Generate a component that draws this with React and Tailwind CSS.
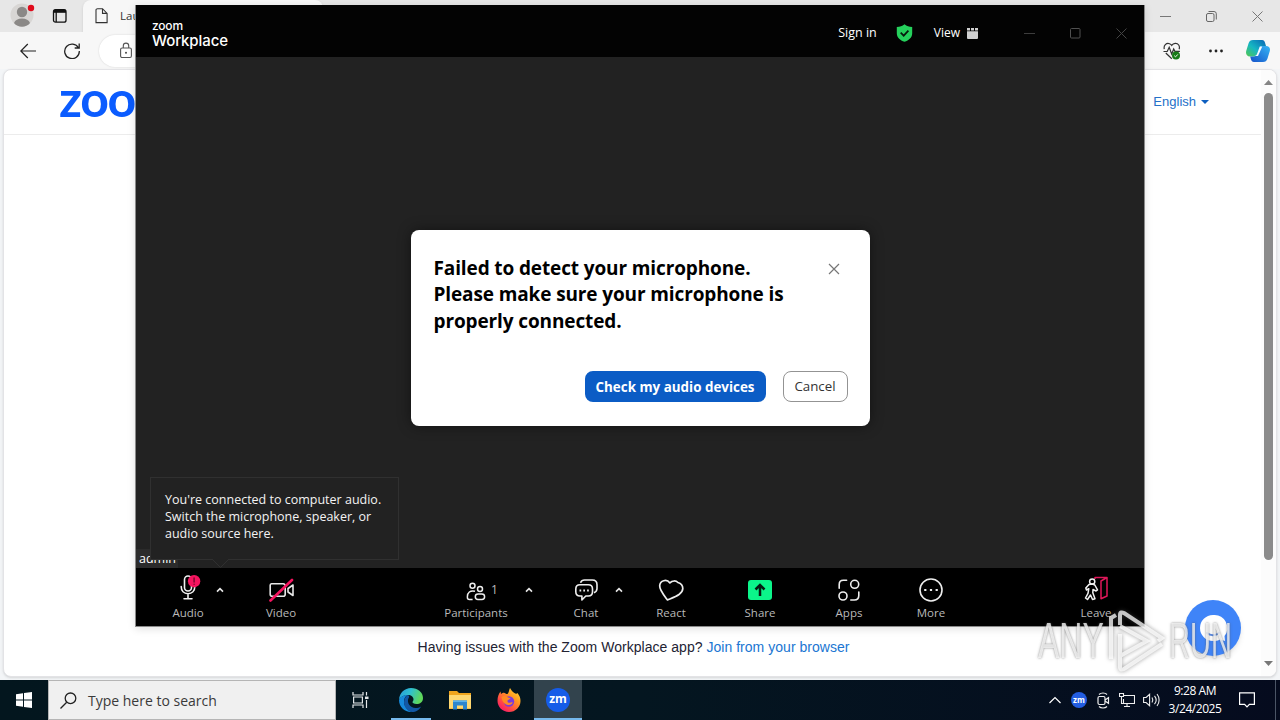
import React from "react";

const ui = "font-['Open_Sans','Noto_Sans',sans-serif]";

function CaretUp() {
  return (
    <svg className="mt-[19px] h-[6px] w-2 shrink-0" viewBox="0 0 8 6" fill="none" stroke="#e6e6e6" strokeWidth="1.6">
      <path d="M1 4.6 4 1.6l3 3" />
    </svg>
  );
}

function ToolItem({ label, className, children }) {
  return (
    <div className={`flex h-full shrink-0 flex-col items-center ${className}`}>
      <div className="flex h-[38px] items-end justify-center pb-1">{children}</div>
      <span className="text-[11.5px] leading-[14px] whitespace-nowrap text-[#b9b9b9]">{label}</span>
    </div>
  );
}

function MicIcon() {
  return (
    <svg className="h-7 w-7" viewBox="0 0 28 28" fill="none" stroke="#f0f0f0" strokeWidth="1.6" strokeLinecap="round">
      <rect x="10.5" y="2" width="7" height="15" rx="3.5" />
      <path d="M7.2 12.5c0 4.5 2.8 7.2 6.8 7.2s6.8-2.7 6.8-7.2M14 19.7v4.5M10 24.7h8" />
      <circle cx="20.1" cy="7.2" r="6.2" fill="#f5145f" stroke="none" />
      <path d="M20.1 4v4M20.1 10.2v.1" stroke="#7a0a30" strokeWidth="1.5" />
    </svg>
  );
}

function VideoIcon() {
  return (
    <svg className="h-6 w-[26px]" viewBox="0 0 26 24" fill="none" stroke="#e8e8e8" strokeWidth="1.6" strokeLinejoin="round">
      <path d="M3.500 5.800h11.700a2 2 0 0 1 2 2v8.400a2 2 0 0 1-2 2H4.200a2 2 0 0 1-2-2V7.300a1.500 1.500 0 0 1 1.300-1.500z" />
      <path d="m20 10.500 5-3.500v10.500l-5-3.500z" />
      <path d="M2.500 22.500 24 2" stroke="#f5145f" strokeWidth="2.600" strokeLinecap="round" />
    </svg>
  );
}

function ParticipantsIcon() {
  return (
    <svg className="h-5 w-5" viewBox="0 0 20 20" fill="none" stroke="#eee" strokeWidth="1.500">
      <circle cx="6.500" cy="3.700" r="2.500" />
      <circle cx="14" cy="7" r="2.500" />
      <path d="M9 9.200C4 8 1.400 10.700 1.400 14.500v1c0 1.300.800 2 2 2h3.200" />
      <rect x="9.300" y="12" width="9.300" height="5.500" rx="2.700" />
    </svg>
  );
}

function ChatIcon() {
  return (
    <svg className="h-6 w-6" viewBox="0 0 24 24" fill="none" stroke="#eee" strokeWidth="1.600" strokeLinejoin="round">
      <path d="M6.500 4.800C7.300 2.900 8.500 2 10.500 2h7.800c2.900 0 4.700 1.800 4.700 4.700v3.800c0 2-1 3.300-3 4.200" />
      <path d="M6 6.800h8.300c2.700 0 4.200 1.500 4.200 4.200v2.800c0 2.700-1.500 4.200-4.200 4.200h-2.500l-3.900 4v-4H6c-2.700 0-4.200-1.500-4.200-4.200V11c0-2.700 1.500-4.200 4.200-4.200z" />
      <path d="M5.500 12.500h1.700M9.300 12.500H11M13.100 12.500h1.700" strokeWidth="1.900" />
    </svg>
  );
}

function HeartIcon() {
  return (
    <svg className="h-6 w-[26px]" viewBox="0 0 26 24" fill="none" stroke="#eee" strokeWidth="1.700" strokeLinejoin="round">
      <path d="M9.500 22C4.800 15.800 1.500 12 1.700 7.800 2 2.500 8.700.600 11.900 4.900c2.400-2.600 6.200-2.400 8-.400 1 .300 4.900 1.900 4.900 6.100 0 5.400-7 7.800-15.300 11.400z" />
    </svg>
  );
}

function ShareIcon() {
  return (
    <svg className="h-6 w-6" viewBox="0 0 24 24">
      <rect y="2" width="24" height="20" rx="3" fill="#0bf58a" />
      <path d="M12 18V7M7.500 11.500 12 7l4.500 4.500" fill="none" stroke="#061c12" strokeWidth="2.500" />
    </svg>
  );
}

function AppsIcon() {
  return (
    <svg className="h-6 w-6" viewBox="0 0 24 24" fill="none" stroke="#eee" strokeWidth="1.600" strokeLinecap="round">
      <circle cx="17.700" cy="6.300" r="4" />
      <circle cx="6" cy="18" r="4" />
      <path d="M2.200 10.300V6.500c0-2.700 1.400-4.200 4.200-4.200h3.200M21.800 14v3.500c0 3-1.500 4.500-4.500 4.500h-3.500" />
    </svg>
  );
}

function MoreIcon() {
  return (
    <svg className="h-6 w-6" viewBox="0 0 24 24" fill="none" stroke="#eee" strokeWidth="1.600">
      <circle cx="12" cy="12" r="11" />
      <path d="M5.200 12h2.200M10.900 12h2.200M16.600 12h2.200" strokeWidth="2.200" />
    </svg>
  );
}

function LeaveIcon() {
  return (
    <svg className="h-[26px] w-6" viewBox="0 0 24 26" fill="none" stroke="#f2f2f2" strokeWidth="1.500" strokeLinejoin="round">
      <path d="M11 3V1.500h12V20l-6 2.800V5l6-3.500" stroke="#e0175a" />
      <circle cx="8.200" cy="5.500" r="2.600" />
      <path d="M5 8.500 1.800 12l.7 2 2.300-1.300-.8 4.600L1.500 22l2 1.500 3-4.500 2 4.500 2.500-.8-2.200-6 .2-3.200L12 15l1.500-1.200L10.800 9 8.500 8z" />
    </svg>
  );
}

function BrowserTabs() {
  return (
    <div className="flex h-8 bg-[#e7e7e7]">
      <div className="flex w-[83px] items-center pl-[10px]">
        <svg className="h-7 w-7" viewBox="0 0 28 28">
          <circle cx="12" cy="13" r="11.500" fill="#d8d6d4" />
          <circle cx="12" cy="10" r="5.200" fill="#8b8987" />
          <path d="M4 21c1-3 4-4.600 8-4.600s7 1.600 8 4.600c-2 2.500-5 3.700-8 3.700S6 23.500 4 21z" fill="#8b8987" />
          <circle cx="21" cy="6" r="3.200" fill="#e00b1c" />
        </svg>
        <svg className="ml-[14px] h-4 w-4" viewBox="0 0 16 16" fill="none" stroke="#111" strokeWidth="1.300">
          <rect x="1.500" y="1.700" width="12.500" height="12.500" rx="2" />
          <path d="M2 3.300h12" strokeWidth="3" />
          <path d="M4.200 4v10" />
        </svg>
      </div>
      <div className="flex w-[240px] items-center rounded-t-lg bg-[#f7f7f7] pl-[12px] shadow-sm">
        <svg className="h-4 w-[13px]" viewBox="0 0 13 16" fill="none" stroke="#333" strokeWidth="1.100">
          <path d="M2.500.700h5l4.600 4.700v9.200H1V2C1 1.200 1.600.700 2.500.700zM7.500.700v4.700h4.600" />
        </svg>
        <span className="ml-3 text-[11.500px] text-[#333]">Lau</span>
      </div>
      <div className="ml-auto flex items-center gap-[35px] pr-[17px]">
        <svg className="h-[11px] w-[11px]" viewBox="0 0 11 11" stroke="#777" strokeWidth="1">
          <path d="M0 5.500h11" />
        </svg>
        <svg className="h-[11px] w-[11px]" viewBox="0 0 11 11" fill="none" stroke="#666" strokeWidth="1">
          <rect x=".500" y="2.500" width="7.500" height="8" rx="1.500" />
          <path d="M2.500.500H8a2.300 2.300 0 0 1 2.300 2.300V8.500" />
        </svg>
        <svg className="h-[11px] w-[11px]" viewBox="0 0 11 11" stroke="#777" strokeWidth="1">
          <path d="m.500.500 10 10M10.500.500l-10 10" />
        </svg>
      </div>
    </div>
  );
}

function BrowserToolbar() {
  return (
    <div className="flex h-[37px] items-center bg-[#f7f7f7] pl-5">
      <svg className="h-4 w-4" viewBox="0 0 16 16" fill="none" stroke="#222" strokeWidth="1.200">
        <path d="M16 8H.800M7.800 1 .800 8l7 7" />
      </svg>
      <svg className="ml-7 h-4 w-4" viewBox="0 0 16 16" fill="none" stroke="#222" strokeWidth="1.300">
        <path d="M14.500 5A7.300 7.300 0 1 0 15.300 8M15.200.500V5h-4.500" />
      </svg>
      <div className="ml-[19px] flex h-8 w-[900px] items-center rounded-full bg-white pl-[21px] shadow-[0_0_2px_rgba(0,0,0,0.15)]">
        <svg className="h-[17px] w-3" viewBox="0 0 12 17" fill="none" stroke="#555" strokeWidth="1.100">
          <rect x=".600" y="6" width="10.800" height="9.500" rx="1.500" />
          <path d="M3.300 6V3.800a2.700 2.700 0 0 1 5.400 0V6" />
          <circle cx="6" cy="10.700" r=".500" fill="#555" />
        </svg>
      </div>
      <div className="ml-auto flex items-center pr-[10px]">
        <svg className="h-[18px] w-[18px]" viewBox="0 0 18 18" fill="none" stroke="#333" strokeWidth="1.200">
          <path d="M1.300 7.200C.300 3.500 3.300.600 6.500 1.700c1 .400 1.700 1 2.200 1.700C10.300 1 14 .500 15.700 3c.900 1.400.900 2.800.400 4.200M.500 9.500h3.700l2-4.200L8.700 12l2-5 1.200 2.300h5M2.800 11l6 5.800" />
          <circle cx="13" cy="13.500" r="4" fill="#167a16" stroke="none" />
          <path d="m11.200 13.600 1.300 1.300 2.300-2.500" stroke="#fff" strokeWidth=".900" />
        </svg>
        <svg className="ml-[27px] h-4 w-4" viewBox="0 0 16 16" fill="#222">
          <circle cx="2.500" cy="8" r="1.400" />
          <circle cx="8" cy="8" r="1.400" />
          <circle cx="13.500" cy="8" r="1.400" />
        </svg>
        <svg className="ml-[22px] h-6 w-6" viewBox="0 0 24 24">
          <defs>
            <linearGradient id="cpA" x1="0" y1="1" x2="1" y2="0">
              <stop offset="0" stopColor="#53c84f" />
              <stop offset=".45" stopColor="#16b7c3" />
              <stop offset="1" stopColor="#0864b5" />
            </linearGradient>
            <linearGradient id="cpB" x1="0" y1="1" x2="1" y2="0">
              <stop offset="0" stopColor="#1552c9" />
              <stop offset="1" stopColor="#35b5f5" />
            </linearGradient>
          </defs>
          <path d="M7 1h9c2 0 2.800 1.500 3.400 4l.6 2h-3.500c-2 0-2.800 1-3.300 2.500l-2 6.500c-.4 1-1 1.500-2 1.500H4C.800 17.500-.500 15 .200 12L2.500 4.500C3.200 2 4.700 1 7 1z" fill="url(#cpA)" />
          <path d="M17 23H8c-2 0-2.800-1.500-3.400-4L4.200 17.500h3.600c2 0 2.700-1 3.200-2.500l2-6c.5-1.500 1.200-2 3.500-2H20c3.200 0 4.500 2 3.800 5l-2.300 7.500C20.800 22 19.300 23 17 23z" fill="url(#cpB)" />
          <path d="M13.800 7.500h2.500L12 17H8.500c1.400-.200 2-1 2.500-2z" fill="#f4fbff" />
        </svg>
      </div>
    </div>
  );
}

function WebPage() {
  return (
    <div className="mx-[3px] flex h-[608px] overflow-hidden rounded-lg border border-[#e3e3e6] bg-white shadow-sm">
      <div className="flex flex-1 flex-col">
        <div className="flex h-[65px] shrink-0 items-center border-b border-[#ececec] pl-[55px]">
          <span className="-mt-2 font-['Lato',sans-serif] text-[50px] leading-[48px] font-bold tracking-[-1.4px] text-[#0b5cff]">zoo</span>
          <div className="mr-[52px] ml-auto flex items-center gap-[5px] font-['Liberation_Sans',sans-serif] text-[13px]">
            <span className="text-[#2470c8]">English</span>
            <svg className="h-1 w-2" viewBox="0 0 8 4" fill="#0e5fc0">
              <path d="M0 0h8L4 4z" />
            </svg>
          </div>
        </div>
        <p className="mt-auto pl-[2px] pb-5 text-center font-['Liberation_Sans',sans-serif] text-[14px] leading-[18px] tracking-[0.03px] text-[#232333]">
          Having issues with the Zoom Workplace app? <span className="text-[#2076d2]">Join from your browser</span>
        </p>
      </div>
      <div className="flex w-[15px] flex-col items-center bg-[#fcfcfc] pt-[10px] pb-[10px]">
        <svg className="h-[5px] w-[9px]" viewBox="0 0 9 5" fill="#858585">
          <path d="M0 5h9L4.500 0z" />
        </svg>
        <div className="mt-2 h-[467px] w-[9px] rounded-full bg-[#8b8b8b]" />
        <svg className="mt-auto h-[5px] w-[9px]" viewBox="0 0 9 5" fill="#777">
          <path d="M0 0h9L4.500 5z" />
        </svg>
      </div>
    </div>
  );
}

function ZoomHeader() {
  return (
    <div className="flex h-[52px] shrink-0 bg-[#030303] text-white">
      <div className="flex flex-col pt-[13px] pl-4">
        <span className="font-['Inter',sans-serif] text-[12px] leading-[15px] font-medium tracking-[-0.2px]">zoom</span>
        <span className="font-['Inter',sans-serif] text-[15px] leading-[15px] font-medium tracking-[-0.1px]">Workplace</span>
      </div>
      <div className="ml-auto flex items-center pt-1 pr-[17px]">
        <span className="text-[12.500px]">Sign in</span>
        <svg className="ml-[19px] h-[18px] w-[17px]" viewBox="0 0 17 18">
          <path d="M8.500.300c2.200 1.800 4.600 2.600 7.700 2.700v6.200c0 4.200-3.200 7-7.700 8.500C4 16.200.800 13.400.800 9.200V3c3.100-.100 5.500-.900 7.700-2.700z" fill="#25d15c" />
          <path d="m4.700 8.700 3 3 4.700-5" fill="none" stroke="#061a0c" strokeWidth="1.700" />
        </svg>
        <span className="ml-[21px] text-[12px]">View</span>
        <svg className="ml-[7px] h-[11px] w-[11px]" viewBox="0 0 11 11" fill="#d0d0d0">
          <path d="M0 0h3v2.500H0zM4 0h3v2.500H4zM8 0h3v2.500H8zM0 3.300h11V10a1 1 0 0 1-1 1H1a1 1 0 0 1-1-1z" />
        </svg>
        <svg className="ml-[46px] h-[11px] w-[11px]" viewBox="0 0 11 11" stroke="#3d3d3d">
          <path d="M0 5.500h11" />
        </svg>
        <svg className="ml-[35px] h-[11px] w-[11px]" viewBox="0 0 11 11" fill="none" stroke="#505050">
          <rect x=".500" y=".500" width="9.500" height="9.500" rx="1" />
        </svg>
        <svg className="ml-[35px] h-[11px] w-[11px]" viewBox="0 0 11 11" stroke="#444">
          <path d="m.500.500 10 10M10.500.500l-10 10" />
        </svg>
      </div>
    </div>
  );
}

function MicDialog() {
  return (
    <div className="mt-[18px] mb-[-32px] flex h-[196px] w-[459px] flex-col rounded-lg bg-white pr-[22px] pb-6 pl-[23px] shadow-[0_0_14px_rgba(0,0,0,0.45)]">
      <div className="flex justify-between pt-[25px]">
        <h1 className="text-[19px] leading-[26.400px] font-bold tracking-[-0.12px] whitespace-nowrap text-black">
          Failed to detect your microphone.
          <br />
          Please make sure your microphone is
          <br />
          properly connected.
        </h1>
        <svg className="mt-2 mr-[8px] h-3 w-3" viewBox="0 0 12 12" stroke="#777" strokeWidth="1.200">
          <path d="m1 1 10 10M11 1 1 11" />
        </svg>
      </div>
      <div className="mt-auto flex justify-end gap-[17px]">
        <button className="h-[31px] w-[181px] rounded-lg bg-[#0b5cc5] pt-px text-[13.400px] font-bold whitespace-nowrap text-white">Check my audio devices</button>
        <button className="h-[31px] w-[65px] rounded-lg border border-[#939393] pt-px text-[13.300px] text-[#333]">Cancel</button>
      </div>
    </div>
  );
}

function AudioTip() {
  return (
    <div className="absolute top-[472px] left-[14px] h-[83px] w-[249px] border border-[#303030] bg-[#222] pt-[13px] pl-[14px] text-[12.500px] leading-[17px] whitespace-nowrap text-[#f3f3f3]">
      You're connected to computer audio.
      <br />
      Switch the microphone, speaker, or
      <br />
      audio source here.
      <svg className="absolute top-[81px] left-[61px] h-[9px] w-[17px]" viewBox="0 0 17 9" fill="#222" stroke="#303030">
        <path d="M0 0 8.500 8.500 17 0" />
      </svg>
    </div>
  );
}

function ZoomWindow() {
  return (
    <div className="absolute top-[5px] left-[135px] flex h-[622px] w-[1010px] flex-col border-x border-b border-[#8a8a8a] bg-[#222] shadow-[0_2px_8px_rgba(0,0,0,0.12)]">
      <ZoomHeader />
      <div className="flex flex-1 items-center justify-center">
        <MicDialog />
      </div>
      <div className="flex h-[19px] w-[42px] shrink-0 items-center bg-[#2b2b2b] pt-px pl-[3px] text-[12.500px] text-white">admin</div>
      <div className="flex h-[58px] shrink-0 bg-black pl-6">
        <ToolItem label="Audio" className="w-14"><MicIcon /></ToolItem>
        <CaretUp />
        <ToolItem label="Video" className="ml-[29px] w-14"><VideoIcon /></ToolItem>
        <ToolItem label="Participants" className="ml-[127px] w-20">
          <div className="flex w-20 items-center pl-[30px]">
            <ParticipantsIcon />
            <span className="mb-1 ml-[5px] text-[12px] leading-4 text-[#bbb]">1</span>
          </div>
        </ToolItem>
        <div className="ml-[9px] w-2"><CaretUp /></div>
        <ToolItem label="Chat" className="ml-[25px] w-14"><ChatIcon /></ToolItem>
        <div className="ml-px w-2"><CaretUp /></div>
        <ToolItem label="React" className="ml-5 w-14"><HeartIcon /></ToolItem>
        <ToolItem label="Share" className="ml-[33px] w-14"><ShareIcon /></ToolItem>
        <ToolItem label="Apps" className="ml-[33px] w-14"><AppsIcon /></ToolItem>
        <ToolItem label="More" className="ml-[26px] w-14"><MoreIcon /></ToolItem>
        <ToolItem label="Leave" className="mr-5 ml-auto w-14"><LeaveIcon /></ToolItem>
      </div>
      <AudioTip />
    </div>
  );
}

function ChatBubble() {
  return (
    <div className="absolute top-[600px] left-[1185px] h-14 w-14 rounded-full bg-[#3f84f8] shadow-md">
      <svg className="h-14 w-14" viewBox="0 0 56 56">
        <path d="M28 15a13 13 0 0 0 0 26c3 0 5-.500 7-1.500l5 1.500-.500-5A13 13 0 0 0 28 15z" fill="#fff" />
        <path d="M22 33c3.500 3 8.500 3 12 0" fill="none" stroke="#5c8be0" strokeWidth="2" strokeLinecap="round" />
      </svg>
    </div>
  );
}

function Watermark() {
  return (
    <div className="absolute top-[609px] left-[1038px] flex h-16 w-[200px] items-center font-['Liberation_Sans',sans-serif] text-[50px] leading-none text-white/75 [text-shadow:0_0_3px_rgba(90,90,90,0.75)]">
      <div className="w-[70px]">
        <span className="inline-block origin-left scale-x-[0.64]">ANY</span>
      </div>
      <svg className="h-[62px] w-[58px] shrink-0 drop-shadow-[0_0_2px_rgba(80,80,80,0.7)]" viewBox="0 0 58 62" fill="none" stroke="#fff" strokeOpacity=".75" strokeWidth="4">
        <path d="M3 49V8l5-3M12 15V5c0-3 2-3 4-2l38 25-4 3M12 24v33c0 3 2 3 4 2l38-25M12 16l27 15-27 15" />
      </svg>
      <div className="ml-[3px] w-[62px]">
        <span className="inline-block origin-left scale-x-[0.58]">RUN</span>
      </div>
    </div>
  );
}

function EdgeIcon() {
  return (
    <svg className="h-6 w-6" viewBox="0 0 24 24">
      <defs>
        <linearGradient id="edgeTop" x1="0" y1="0" x2="1" y2=".3">
          <stop offset="0" stopColor="#2799dd" />
          <stop offset=".5" stopColor="#2fc0d0" />
          <stop offset="1" stopColor="#5fd85b" />
        </linearGradient>
      </defs>
      <path d="M0 11.500C.500 5 5.500 0 12 0c7 0 12 4.500 12 10 0 4-3 6-6.500 6-2.700 0-4.200-.900-4-1.900.200-.700 1-1.200 1-2.800 0-2.300-2.200-4.300-5.500-4.300C5 7 1.500 9 0 11.500z" fill="url(#edgeTop)" />
      <path d="M0 12c1-3 4.500-5 8.500-5-2 1-3.500 3.500-3.500 6.500 0 5 3.500 9 8 10.400C6 24.500 0 19 0 12z" fill="#1689dc" />
      <path d="M9.500 10.300C7.500 14.500 11 20 16.500 20c2 0 4-.700 5.500-1.600C20.500 21.500 17 24 13 24c-4.500-1.200-8-5-8-9.800C5 10.500 7 8.500 8.500 7c2 .500 2 2 1 3.300z" fill="#1257a5" />
    </svg>
  );
}

function FirefoxIcon() {
  return (
    <svg className="h-6 w-6" viewBox="0 0 24 24">
      <defs>
        <linearGradient id="ffBody" x1="1" y1="0" x2=".2" y2="1">
          <stop offset="0" stopColor="#ffe33e" />
          <stop offset=".4" stopColor="#ff9a1f" />
          <stop offset=".75" stopColor="#ff4548" />
          <stop offset="1" stopColor="#f5146e" />
        </linearGradient>
      </defs>
      <path d="M13 0c1.500 2 2 3.500 4 4.800C18.500 6 20 6 20.500 5c2 2.500 3 5 3 8C23.500 19 18.500 24 12 24S.500 19 .500 12.800C.500 9 1.500 6 3.500 3.500L4 6c1-1 2-1.300 3-1.300C8 5 9 6 10.500 6 12 4.500 12 2 13 0z" fill="url(#ffBody)" />
      <circle cx="12" cy="13.500" r="5.200" fill="#7a3bdc" />
      <path d="M4.500 9c2-1.500 5-1 6.500.500 1 .300 2 .300 2.500.600-.500 1.400-2.500 1.500-3 2.700-.300 1 .500 2 2 2 1.300 0 2-.700 3.200-.500-.500 2-2.500 3-4.500 2.700C7 16.500 5 13 4.500 9z" fill="#ff8a22" />
    </svg>
  );
}

function Taskbar() {
  return (
    <div className="flex h-10 bg-linear-to-r from-[#03161e] via-[#041620] to-[#050b1e]">
      <div className="flex w-12 items-center justify-center">
        <svg className="h-4 w-4" viewBox="0 0 16 16" fill="#fff">
          <path d="M0 2.300 7 1.300v6.300H0zM8 1.100 16 0v7.600H8zM0 8.500h7v6.300l-7-1zM8 8.500h8V16l-8-1.100z" />
        </svg>
      </div>
      <div className="flex w-72 items-center border border-[#b5b5b5] bg-[#f0f0f0] pl-[11px]">
        <svg className="h-[17px] w-[17px]" viewBox="0 0 17 17" fill="none" stroke="#222" strokeWidth="1.300">
          <circle cx="10.500" cy="6.300" r="5.300" />
          <path d="M6.700 10.200.500 16.500" />
        </svg>
        <span className="mt-px ml-[11px] text-[14px] text-[#3a3a3a]">Type here to search</span>
      </div>
      <div className="flex w-12 items-center justify-center">
        <svg className="h-4 w-[17px]" viewBox="0 0 17 16" fill="none" stroke="#e4e8ea" strokeWidth="1.200">
          <path d="M1 0v3h10V0M1 16v-3h10v3M1.600 5h8.800v6H1.600zM14.500 0v3.500M14.500 8v8" />
          <path d="M13 5.800h3.500" strokeWidth="2.500" />
        </svg>
      </div>
      <div className="mr-1 ml-[7px] flex w-10 flex-col items-center border-b-2 border-[#76b9ed] pt-2"><EdgeIcon /></div>
      <div className="flex w-12 items-center justify-center pl-[2px]">
        <svg className="h-5 w-[22px]" viewBox="0 0 22 20">
          <path d="M0 1h8l2 2h12v16H0z" fill="#f0a51d" />
          <path d="M0 5h22v13.500H0z" fill="#ffd871" />
          <path d="M4 19.500v-9h14v9h-4v-4H8v4z" fill="#2d86cd" />
          <path d="M4 10.500h14v1.500H4z" fill="#5bb3ec" />
        </svg>
      </div>
      <div className="flex w-[51px] items-center justify-center"><FirefoxIcon /></div>
      <div className="flex w-12 items-center justify-center border-b-2 border-[#76b9ed] bg-[#32434d] pt-[2px]">
        <div className="flex h-6 w-6 items-center justify-center rounded-full bg-[#165ce8] pb-[2px] text-[12px] leading-none font-bold text-white">zm</div>
      </div>
      <div className="ml-auto flex items-center">
        <svg className="h-2 w-3" viewBox="0 0 12 8" fill="none" stroke="#fff" strokeWidth="1.200">
          <path d="m.500 7 5.500-5.500L11.500 7" />
        </svg>
        <div className="ml-[10px] flex h-4 w-4 items-center justify-center rounded-full bg-[#235de0] pb-px text-[8px] leading-none font-bold text-white">zm</div>
        <svg className="ml-2 h-[17px] w-4" viewBox="0 0 16 17" fill="none" stroke="#eee" strokeWidth="1.200">
          <rect x="3" y="4.500" width="7" height="8" rx="1.500" />
          <path d="m10 8 3.500-2.300v5.600L10 9M4 2.500C6 .500 10 .500 12 2.500M4 14.500c2 2 6 2 8 0" />
        </svg>
        <svg className="ml-2 h-4 w-4" viewBox="0 0 16 16" fill="none" stroke="#eee" strokeWidth="1.100">
          <path d="M5 3.500h10.500v8H4.500V7M8 11.500v3M5 14.500h6M.500 1.500h4v3h-4zM2.500 4.500v7h2" />
        </svg>
        <svg className="ml-2 h-4 w-[17px]" viewBox="0 0 17 16" fill="none" stroke="#eee" strokeWidth="1.100">
          <path d="M.600 5.500h2.500l3.500-3.200v11.400L3.100 10.500H.600zM9 5.500c1 1.500 1 3.500 0 5M11.500 3.800c2 2.500 2 6 0 8.400M14 2c2.800 3.500 2.800 8.500 0 12" />
        </svg>
        <div className="ml-[7px] flex w-[56px] flex-col items-center text-[12px] leading-[18px] tracking-[-0.45px] whitespace-nowrap text-white">
          <span>9:28 AM</span>
          <span>3/24/2025</span>
        </div>
        <svg className="ml-4 h-4 w-4" viewBox="0 0 16 16" fill="none" stroke="#fff" strokeWidth="1.200">
          <path d="M.600.800h14.800v11.500h-5L8 14.800l-2.400-2.500h-5z" />
        </svg>
        <div className="mr-1 ml-5 h-10 w-px bg-[#4b5566]" />
      </div>
    </div>
  );
}

export default function App() {
  return (
    <div className={`relative h-[720px] w-[1280px] overflow-hidden bg-[#f3f5f7] ${ui}`}>
      <div className="flex h-[680px] flex-col">
        <BrowserTabs />
        <BrowserToolbar />
        <WebPage />
      </div>
      <Taskbar />
      <ZoomWindow />
      <ChatBubble />
      <Watermark />
    </div>
  );
}
